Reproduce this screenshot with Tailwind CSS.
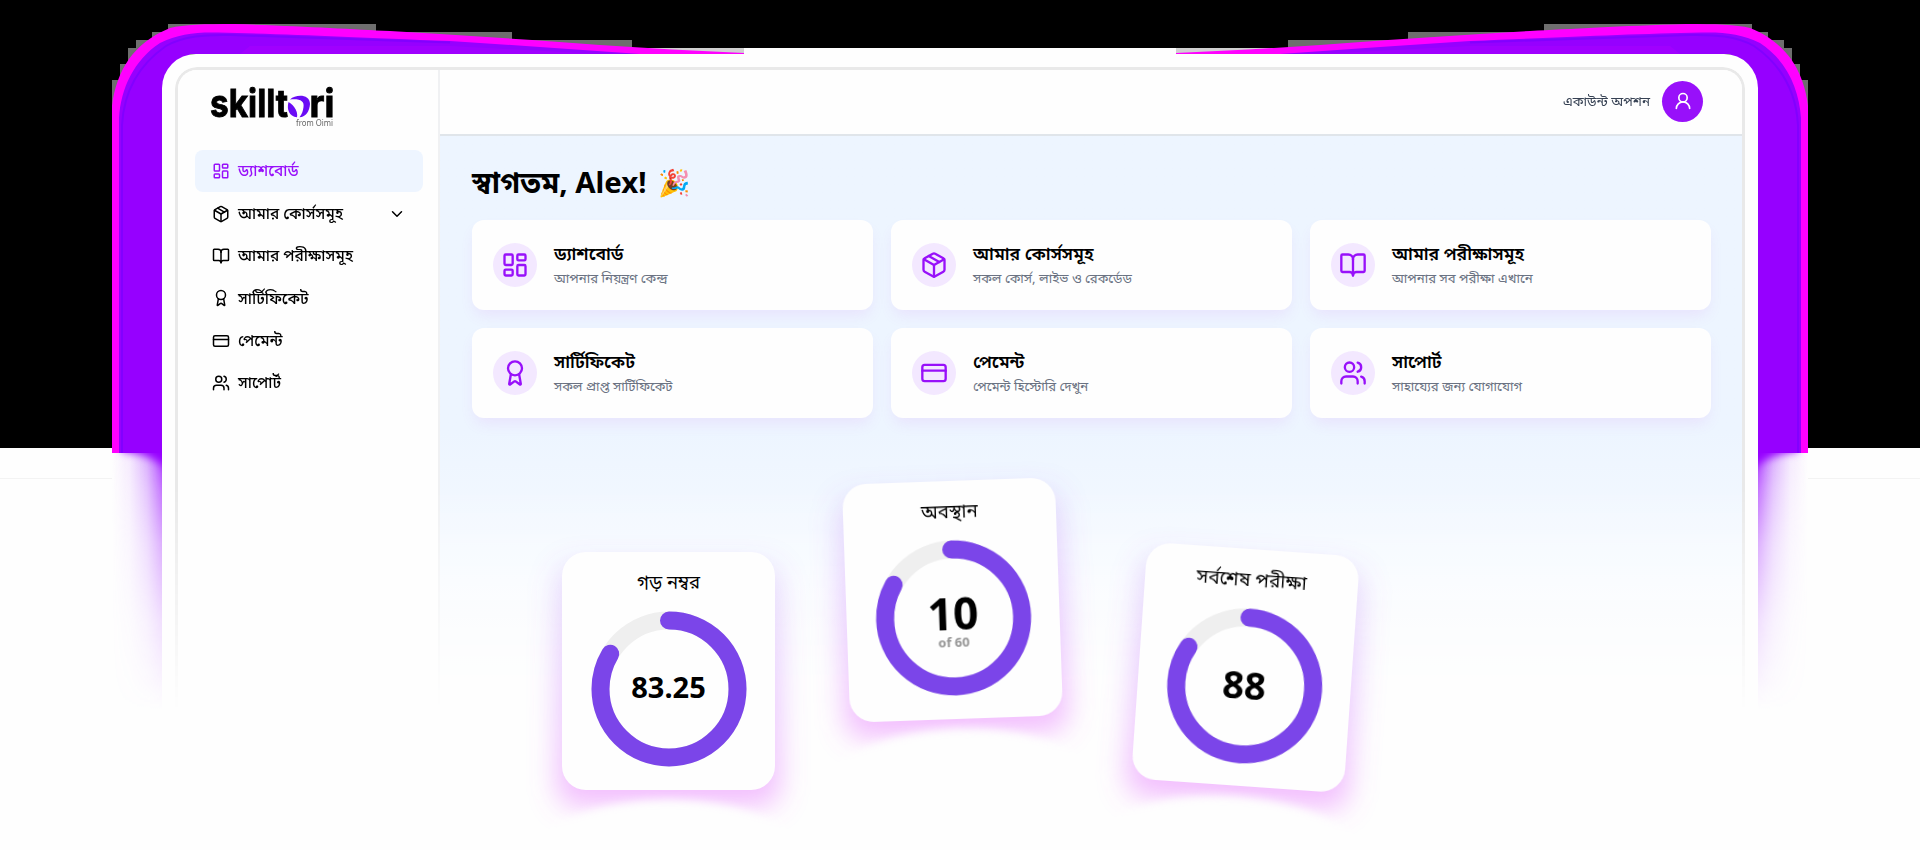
<!DOCTYPE html>
<html lang="bn">
<head>
<meta charset="utf-8">
<title>skilltori</title>
<script src="https://cdn.jsdelivr.net/npm/@tailwindcss/browser@4"></script>
</head>
<body class="bg-[#fefefe] font-['Noto_Sans','Noto_Sans_Bengali',sans-serif] text-black overflow-hidden">
<svg class="hidden">
  <symbol id="dash" viewBox="0 0 24 24"><rect x="3" y="3" width="7" height="9" rx="1"/><rect x="14" y="3" width="7" height="5" rx="1"/><rect x="14" y="12" width="7" height="9" rx="1"/><rect x="3" y="16" width="7" height="5" rx="1"/></symbol>
  <symbol id="box" viewBox="0 0 24 24"><path d="M11 21.73a2 2 0 0 0 2 0l7-4A2 2 0 0 0 21 16V8a2 2 0 0 0-1-1.73l-7-4a2 2 0 0 0-2 0l-7 4A2 2 0 0 0 3 8v8a2 2 0 0 0 1 1.73z"/><path d="M12 22V12"/><path d="m3.3 7 8.7 5 8.7-5"/><path d="m7.5 4.27 9 5.15"/></symbol>
  <symbol id="book" viewBox="0 0 24 24"><path d="M12 7v14"/><path d="M3 18a1 1 0 0 1-1-1V4a1 1 0 0 1 1-1h5a4 4 0 0 1 4 4 4 4 0 0 1 4-4h5a1 1 0 0 1 1 1v13a1 1 0 0 1-1 1h-6a3 3 0 0 0-3 3 3 3 0 0 0-3-3z"/></symbol>
  <symbol id="award" viewBox="0 0 24 24"><path d="m15.477 12.89 1.515 8.526a.5.5 0 0 1-.81.47l-3.58-2.687a1 1 0 0 0-1.197 0l-3.586 2.686a.5.5 0 0 1-.81-.469l1.514-8.526"/><circle cx="12" cy="8" r="6"/></symbol>
  <symbol id="card" viewBox="0 0 24 24"><rect x="2" y="5" width="20" height="14" rx="2"/><path d="M2 10h20"/></symbol>
  <symbol id="users" viewBox="0 0 24 24"><path d="M16 21v-2a4 4 0 0 0-4-4H6a4 4 0 0 0-4 4v2"/><circle cx="9" cy="7" r="4"/><path d="M22 21v-2a4 4 0 0 0-3-3.87"/><path d="M16 3.13a4 4 0 0 1 0 7.75"/></symbol>
</svg>

<div class="relative w-[1920px] h-[850px] overflow-hidden">
  <!-- glow behind the device -->
  <svg class="absolute inset-0" width="1920" height="850" viewBox="0 0 1920 850">
    <defs>
      <filter id="soft" x="-50%" y="-50%" width="200%" height="200%"><feGaussianBlur stdDeviation="4"/></filter>
      <linearGradient id="side" x1="112" y1="0" x2="162" y2="0" gradientUnits="userSpaceOnUse"><stop offset="0" stop-color="#c060ff" stop-opacity="0"/><stop offset=".35" stop-color="#b860ff" stop-opacity=".13"/><stop offset=".7" stop-color="#a83cff" stop-opacity=".42"/><stop offset="1" stop-color="#9c14ff" stop-opacity=".85"/></linearGradient>
      <linearGradient id="down" x1="0" y1="453" x2="0" y2="710" gradientUnits="userSpaceOnUse"><stop offset="0" stop-color="#fff"/><stop offset=".15" stop-color="#fff" stop-opacity=".68"/><stop offset=".35" stop-color="#fff" stop-opacity=".4"/><stop offset=".65" stop-color="#fff" stop-opacity=".16"/><stop offset="1" stop-color="#fff" stop-opacity="0"/></linearGradient>
      <mask id="downMask" maskUnits="userSpaceOnUse" x="100" y="450" width="80" height="280"><rect x="100" y="453" width="80" height="270" fill="url(#down)"/></mask>
      <clipPath id="below"><rect x="112" y="453" width="60" height="270"/></clipPath>
      <g id="half">
        <path fill="#6e6e6e" d="M112 448V80h8V64h8V48h8V40h16V32h16V24h208v8h136v8h120v8h50v6H200L120 140V448z"/>
        <path fill="#d0d0d0" d="M632 48h112v6H632z"/>
        <path fill="#ff00ff" d="M112 453V106C114 88 120 72 129 59C138 47 150 36 170 28C184 24.500 205 24 234 24C300 26 350 29 390 31L440 34L532 40L600 45L672 49.500L744 53V54H190L170 453z"/>
        <path fill="#9600ff" d="M119 453V118C121 88 134 60 160 43C178 34 195 32 218 32.500C290 34 350 37 450 41L540 47L640 54H190L170 453z"/>
        <path fill="none" stroke="#7400ff" stroke-width="2" opacity=".6" d="M122 453V125C124 90 140 64 166 46C184 36 205 34.500 230 35L450 42.500"/>
        <path fill="#b800ff" d="M250 46L450 46L600 54H240z" opacity=".3"/>
        <rect x="112" y="453" width="50" height="270" fill="url(#side)" mask="url(#downMask)"/>
        <g clip-path="url(#below)"><path d="M122 440H180V480Q160 454 122 451z" fill="#9600ff" filter="url(#soft)"/></g>
      </g>
    </defs>
    <rect width="1920" height="448" fill="#000"/>
    <path d="M744 48h432v8H744zM112 453h1696v300H112z" fill="#fefefe"/>
    <path d="M0 478.500h112M1808 478.500h112" stroke="#f3f3f3"/>
    <use href="#half"/>
    <use href="#half" transform="matrix(-1 0 0 1 1920 0)"/>
    <path d="M162 448H1758V740H162z" fill="#fefefe"/>
  </svg>

  <!-- device -->
  <div class="relative ml-[162px] mt-[54px] w-[1596px] h-[680px] rounded-t-[34px] bg-[#fefefe] p-[13px] pb-0">
    <div class="flex h-[660px] w-[1570px] rounded-t-[22px] border-[3px] border-b-0 border-[#e9e9e9] overflow-hidden [mask-image:linear-gradient(to_bottom,#000_420px,transparent_645px)]">
      <aside class="w-[262px] shrink-0 border-r-2 border-[#f0f1f3] bg-[#fefefe] pl-[17px] pr-[15px] pt-[17px]">
        <svg class="ml-4 overflow-visible" width="126" height="40" viewBox="0 0 126 40">
          <g font-family="Inter,'Open Sans',sans-serif" font-weight="700" font-size="38" stroke="#000" stroke-width=".9">
            <text x="-1" y="30" textLength="78" lengthAdjust="spacingAndGlyphs">skillt</text>
            <text x="98.500" y="30" textLength="25" lengthAdjust="spacingAndGlyphs">ri</text>
          </g>
          <path d="M79 12.500C85 7 99 7 99 17C98.500 24 95 30 88.500 30.300C91 27 92 24 92.500 20C93.500 14 89 11.500 79 12.500Z" fill="#6a0cf5"/>
          <path d="M77.500 15C75.500 22 78 29.500 86 30.300C87 25 84 19 77.500 15Z" fill="#6a0cf5"/>
          <text x="85" y="39" font-size="8.300" fill="#666" textLength="37" lengthAdjust="spacingAndGlyphs">from Oimi</text>
        </svg>
        <nav class="mt-[23px] flex flex-col text-[15.500px] font-medium leading-none [&_svg]:size-[18px] [&_svg]:fill-none [&_svg]:stroke-current [&_svg]:stroke-2 [&_svg]:[stroke-linecap:round] [&_svg]:[stroke-linejoin:round]">
          <a class="flex h-[42.400px] items-center gap-2 rounded-lg bg-[#eef5ff] px-[17px] text-[#9810fa]"><svg><use href="#dash"/></svg><span>ড্যাশবোর্ড</span></a>
          <a class="flex h-[42.400px] items-center gap-2 px-[17px]"><svg><use href="#box"/></svg><span>আমার কোর্সসমূহ</span><svg class="ml-auto" viewBox="0 0 24 24"><path d="m6 9 6 6 6-6"/></svg></a>
          <a class="flex h-[42.400px] items-center gap-2 px-[17px]"><svg><use href="#book"/></svg><span>আমার পরীক্ষাসমূহ</span></a>
          <a class="flex h-[42.400px] items-center gap-2 px-[17px]"><svg><use href="#award"/></svg><span>সার্টিফিকেট</span></a>
          <a class="flex h-[42.400px] items-center gap-2 px-[17px]"><svg><use href="#card"/></svg><span>পেমেন্ট</span></a>
          <a class="flex h-[42.400px] items-center gap-2 px-[17px]"><svg><use href="#users"/></svg><span>সাপোর্ট</span></a>
        </nav>
      </aside>
      <div class="flex grow flex-col">
        <header class="flex h-[66px] shrink-0 items-center justify-end gap-3 border-b-2 border-[#e0e5ea] bg-[#fefefe] pb-[2px] pr-[39px]">
          <span class="text-[13.400px] text-[#364153]">একাউন্ট অপশন</span>
          <span class="flex size-[41px] items-center justify-center rounded-full bg-[#9810fa]">
            <svg class="size-5 fill-none stroke-white stroke-2" viewBox="0 0 24 24" stroke-linecap="round"><circle cx="12" cy="8" r="5"/><path d="M20 21a8 8 0 0 0-16 0"/></svg>
          </span>
        </header>
        <main class="grow bg-linear-to-b from-[#edf5ff] from-50% to-white pl-8 pr-[31px]">
          <h1 class="flex h-[84px] items-center gap-3 pt-[10px] text-[29.400px] font-bold leading-none"><span>স্বাগতম, Alex!</span><span class="font-['Noto_Color_Emoji'] text-[26px] font-normal">🎉</span></h1>
          <div class="grid grid-cols-3 gap-[18px] leading-none [&>div]:flex [&>div]:h-[90px] [&>div]:items-center [&>div]:gap-[17px] [&>div]:rounded-xl [&>div]:bg-[#fefefe] [&>div]:pl-[21px] [&>div]:shadow-[0_8px_14px_-2px_rgba(200,90,240,0.1)] [&_i]:flex [&_i]:size-[44px] [&_i]:items-center [&_i]:justify-center [&_i]:rounded-full [&_i]:bg-[#f3e8ff] [&_svg]:size-7 [&_svg]:fill-none [&_svg]:stroke-[#9810fa] [&_svg]:stroke-2 [&_svg]:[stroke-linecap:round] [&_svg]:[stroke-linejoin:round] [&_b]:block [&_b]:text-[17.600px] [&_b]:font-semibold [&_b]:leading-[26px] [&_p]:text-[13.200px] [&_p]:leading-[24px] [&_p]:text-[#6a7282]">
            <div><i><svg><use href="#dash"/></svg></i><section><b>ড্যাশবোর্ড</b><p>আপনার নিয়ন্ত্রণ কেন্দ্র</p></section></div>
            <div><i><svg><use href="#box"/></svg></i><section><b>আমার কোর্সসমূহ</b><p>সকল কোর্স, লাইভ ও রেকর্ডেড</p></section></div>
            <div><i><svg><use href="#book"/></svg></i><section><b>আমার পরীক্ষাসমূহ</b><p>আপনার সব পরীক্ষা এখানে</p></section></div>
            <div><i><svg><use href="#award"/></svg></i><section><b>সার্টিফিকেট</b><p>সকল প্রাপ্ত সার্টিফিকেট</p></section></div>
            <div><i><svg><use href="#card"/></svg></i><section><b>পেমেন্ট</b><p>পেমেন্ট হিস্টোরি দেখুন</p></section></div>
            <div><i><svg><use href="#users"/></svg></i><section><b>সাপোর্ট</b><p>সাহায্যের জন্য যোগাযোগ</p></section></div>
          </div>
        </main>
      </div>
    </div>
  </div>

  <!-- floating result cards -->
  <svg class="absolute size-0">
    <defs>
      <filter id="blur" filterUnits="userSpaceOnUse" x="-40" y="-40" width="400" height="440"><feGaussianBlur stdDeviation="14"/></filter>
      <filter id="edge" filterUnits="userSpaceOnUse" x="-40" y="-40" width="400" height="600"><feGaussianBlur stdDeviation="4"/></filter>
      <linearGradient id="pink" x1="0" y1="0" x2="0" y2="1"><stop offset="0" stop-color="#a060f0" stop-opacity=".2"/><stop offset=".5" stop-color="#c468ff" stop-opacity=".36"/><stop offset="1" stop-color="#e868ff" stop-opacity=".44"/></linearGradient>
      <mask id="arch" maskUnits="userSpaceOnUse" x="-40" y="-40" width="400" height="440"><rect x="-40" y="-40" width="400" height="440" fill="#fff"/><ellipse cx="156" cy="378" rx="155" ry="80" fill="#000" filter="url(#edge)"/></mask>
    </defs>
    <symbol id="glow" viewBox="0 0 313 337" overflow="visible"><g mask="url(#arch)"><rect x="45" y="62" width="223" height="242" rx="20" fill="url(#pink)" filter="url(#blur)"/></g></symbol>
    <symbol id="ring" viewBox="0 0 156 156"><circle cx="78" cy="78" r="68.500" fill="none" stroke="#efefef" stroke-width="18"/><circle cx="78" cy="78" r="68.500" fill="none" stroke="#7b45e9" stroke-width="18" stroke-linecap="round" pathLength="100" stroke-dasharray="83.600 100" transform="rotate(-90 78 78)"/></symbol>
  </svg>
  <div class="absolute left-[562px] top-[552px] h-[238px] w-[213px]">
    <svg class="absolute -left-[50px] -top-[50px] overflow-visible" width="313" height="337"><use href="#glow"/></svg>
    <div class="relative flex h-full flex-col items-center rounded-[24px] bg-[#fefefe]">
      <div class="mt-[15px] h-[44px] text-[18.500px] leading-[30px]">গড় নম্বর</div>
      <div class="relative size-[156px]"><svg class="size-full"><use href="#ring"/></svg><div class="absolute inset-0 flex items-center justify-center pb-[6px] text-[29px] font-bold leading-none">83.25</div></div>
    </div>
  </div>
  <div class="absolute left-[846px] top-[481px] h-[238px] w-[213px] -rotate-2">
    <svg class="absolute -left-[50px] -top-[50px] overflow-visible" width="313" height="337"><use href="#glow"/></svg>
    <div class="relative flex h-full flex-col items-center rounded-[24px] bg-[#fefefe]">
      <div class="mt-[15px] h-[44px] text-[18.800px] leading-[30px]">অবস্থান</div>
      <div class="relative size-[156px]"><svg class="size-full"><use href="#ring"/></svg><div class="absolute inset-0 flex flex-col items-center justify-center pt-1 text-[44.500px] font-bold leading-[43px]">10<span class="text-[13px] leading-[16px] text-[#949494]">of 60</span></div></div>
    </div>
  </div>
  <div class="absolute left-[1139px] top-[549px] h-[237px] w-[213px] rotate-4">
    <svg class="absolute -left-[50px] -top-[50px] overflow-visible" width="313" height="337"><use href="#glow"/></svg>
    <div class="relative flex h-full flex-col items-center rounded-[24px] bg-[#fefefe]">
      <div class="mt-[15px] h-[44px] text-[19px] leading-[30px]">সর্বশেষ পরীক্ষা</div>
      <div class="relative size-[156px]"><svg class="size-full"><use href="#ring"/></svg><div class="absolute inset-0 flex items-center justify-center pb-1 text-[38px] font-bold leading-none">88</div></div>
    </div>
  </div>
</div>
</body>
</html>
